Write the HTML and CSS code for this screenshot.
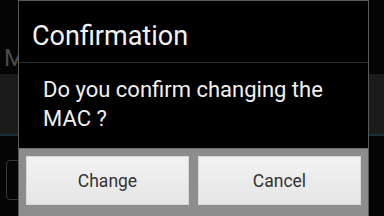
FILE: index.html
```html
<!DOCTYPE html>
<html lang="en">
<head>
  <meta charset="UTF-8">
  <title>Confirmation</title>
  <link rel="stylesheet" href="styles.css">
</head>
<body>

<!-- screen behind the dialog -->
<div class="screen">
  <div class="screen-title">M</div>
  <div class="screen-field"></div>
  <div class="screen-line"></div>
  <div class="screen-box"></div>
</div>

<div class="dialog">
  <div class="dialog-title">Confirmation</div>
  <div class="dialog-msg">Do you confirm changing the MAC ?</div>
  <div class="dialog-buttons">
    <button class="btn">Change</button>
    <button class="btn">Cancel</button>
  </div>
</div>

</body>
</html>
```

FILE: styles.css
```css
body {
    margin: 0;
    width: 384px;
    height: 216px;
    overflow: hidden;
    background-color: #050505;
    font-family: Roboto, "Noto Sans", sans-serif;
    position: relative;
}

/* Underlying screen */
.screen {
    padding-top: 44px;
}

.screen-title {
    color: #4a4a4a;
    font-size: 24px;
    padding-left: 4px;
    height: 30px;
}

.screen-field {
    height: 60px;
    background-color: #1b1b1b;
}

.screen-line {
    height: 2px;
    background-color: #16303c;
}

.screen-box {
    margin: 24px 0 0 6px;
    width: 30px;
    height: 38px;
    border: 1px solid #3a3a3a;
    border-radius: 4px;
}

/* Dialog */
.dialog {
    position: absolute;
    left: 18px;
    top: 0;
    width: 349px;
    height: 230px;
    border: 1px solid #5a5a5a;
    background-color: #000;
}

.dialog-title {
    height: 61px;
    padding-left: 13px;
    color: #f2f2f2;
    font-size: 27px;
    line-height: 70px;
    border-bottom: 1px solid #2c2c2c;
}

.dialog-msg {
    height: 85px;
    box-sizing: border-box;
    padding: 12px 30px 0 24px;
    color: #f0f0f0;
    font-size: 22px;
    line-height: 29px;
}

.dialog-buttons {
    display: flex;
    gap: 9px;
    padding: 7px 7px 0 7px;
    height: 82px;
    background-color: #8d8d8d;
    border-top: 1px solid #6f6f6f;
}

.btn {
    flex: 1;
    height: 49px;
    border: 1px solid #d8d8d8;
    background: linear-gradient(#f2f2f2, #e6e6e6);
    color: #333;
    font-family: Roboto, "Noto Sans", sans-serif;
    font-size: 17.5px;
    padding: 0;
}
```
